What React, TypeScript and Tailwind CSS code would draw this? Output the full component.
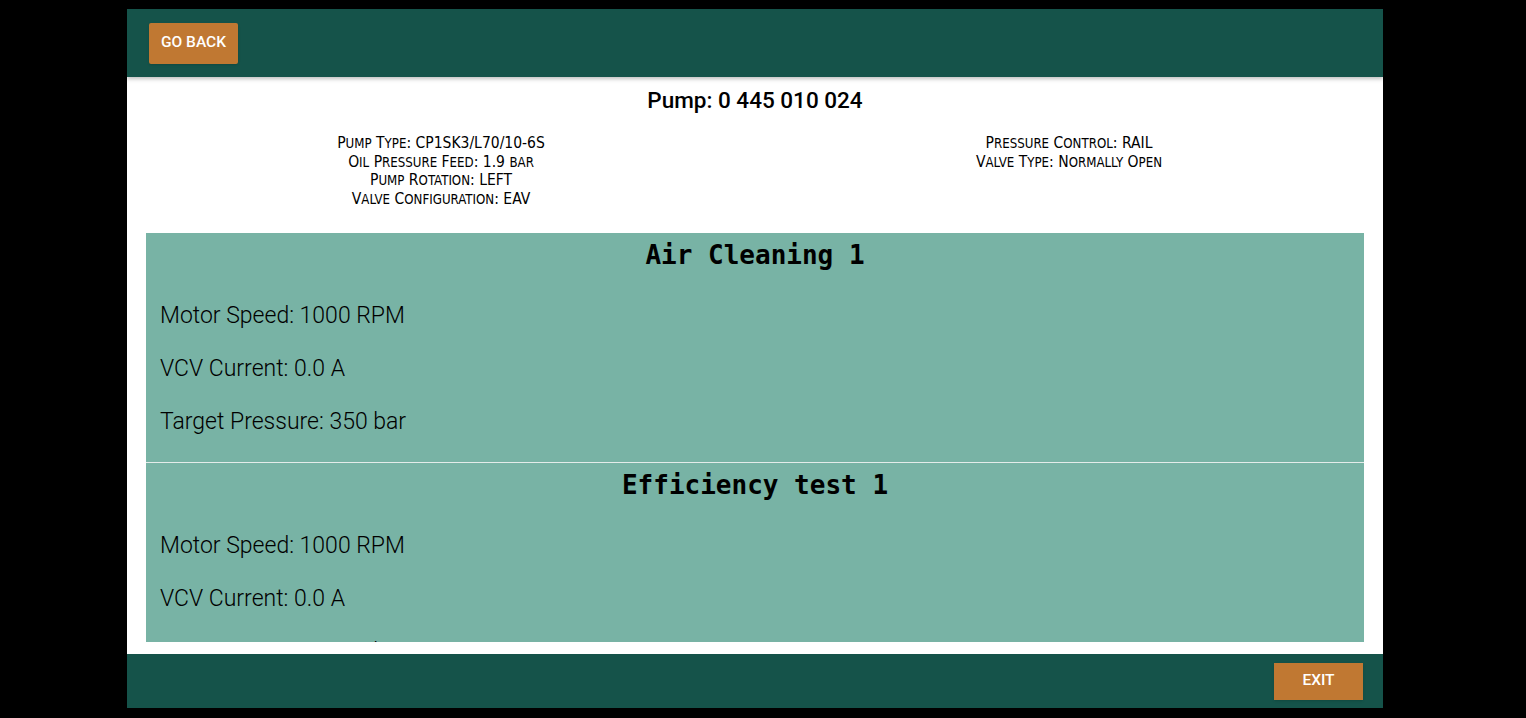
const sections = [
  {
    title: "Air Cleaning 1",
    items: ["Motor Speed: 1000 RPM", "VCV Current: 0.0 A", "Target Pressure: 350 bar"],
  },
  {
    title: "Efficiency test 1",
    items: ["Motor Speed: 1000 RPM", "VCV Current: 0.0 A", "Target Pressure: 350 bar"],
  },
];

const leftInfo = [
  "Pump Type: CP1SK3/L70/10-6S",
  "Oil Pressure Feed: 1.9 bar",
  "Pump Rotation: LEFT",
  "Valve Configuration: EAV",
];

const rightInfo = ["Pressure Control: RAIL", "Valve Type: Normally Open"];

// small caps: lowercase runs drawn as smaller capitals
function SmallCaps({ text }: { text: string }) {
  const runs = text.match(/[a-z]+|[^a-z]+/g) ?? [];
  return (
    <div className="h-[18.5px] leading-[18.5px]">
      {runs.map((r, i) =>
        /[a-z]/.test(r) ? (
          <span key={i} className="uppercase text-[0.85em] leading-none">
            {r}
          </span>
        ) : (
          <span key={i}>{r}</span>
        )
      )}
    </div>
  );
}

function Section({ title, items }: { title: string; items: string[] }) {
  return (
    <div className="pt-1 pb-[13px] border-b border-[#e4ecea]">
      <h3 className="text-center font-['DejaVu_Sans_Mono',monospace] font-bold text-[26px] leading-[36px] text-black">
        {title}
      </h3>
      <div className="mt-[17px] px-[14px]">
        {items.map((item) => (
          <p
            key={item}
            className="h-[53px] flex items-center font-['Roboto',sans-serif] font-light text-[23px] text-black"
          >
            {item}
          </p>
        ))}
      </div>
    </div>
  );
}

export default function App() {
  return (
    <div className="w-full h-[718px] bg-black flex pl-[127px] pt-[9px]">
      <div className="w-[1256px] h-[699px] bg-white flex flex-col">
        <header className="h-[68px] shrink-0 bg-[#15534a] px-[22px] flex items-center shadow-[0_2px_4px_rgba(0,0,0,0.25)] relative z-10">
          <button className="w-[89px] h-[41px] bg-[#c07832] rounded-[2px] text-white font-['Roboto',sans-serif] font-medium text-[15.5px] shadow-sm">
            GO BACK
          </button>
        </header>

        <main className="flex-1 flex flex-col min-h-0">
          <h1 className="text-center pt-[9px] font-['Roboto',sans-serif] font-medium text-[22.5px] leading-[28px] text-black">
            Pump: 0 445 010 024
          </h1>
          <div className="grid grid-cols-2 pt-[20px] font-['DejaVu_Sans_Condensed','DejaVu_Sans',sans-serif] text-[15.5px] text-black">
            <div className="text-center">
              {leftInfo.map((l) => (
                <SmallCaps key={l} text={l} />
              ))}
            </div>
            <div className="text-center">
              {rightInfo.map((l) => (
                <SmallCaps key={l} text={l} />
              ))}
            </div>
          </div>
          <div className="mt-auto mx-[19px] mb-[12px] h-[409px] bg-[#78b3a5] overflow-hidden">
            {sections.map((s) => (
              <Section key={s.title} title={s.title} items={s.items} />
            ))}
          </div>
        </main>

        <footer className="h-[54px] shrink-0 bg-[#15534a] px-[20px] flex items-center justify-end">
          <button className="w-[89px] h-[37px] bg-[#c07832] text-white font-['Roboto',sans-serif] font-medium text-[15.5px] shadow-sm">
            EXIT
          </button>
        </footer>
      </div>
    </div>
  );
}
